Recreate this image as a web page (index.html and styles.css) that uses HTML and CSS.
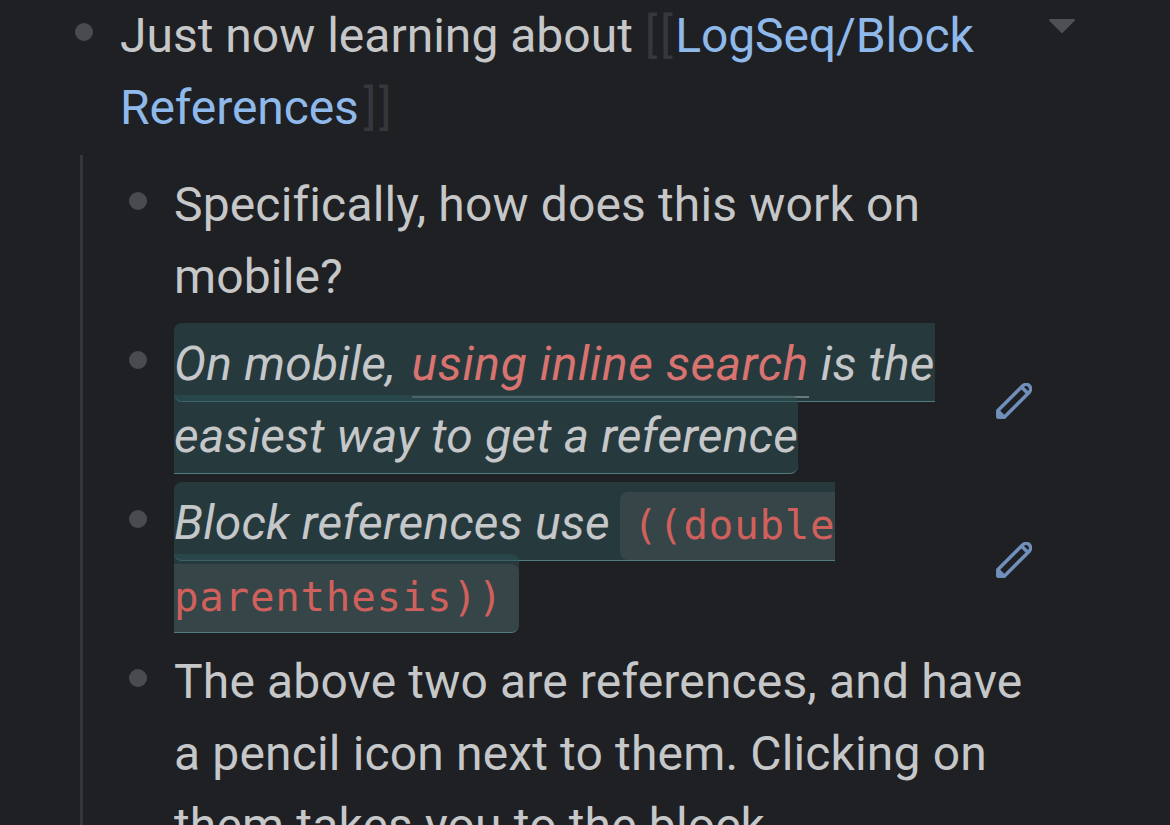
FILE: index.html
```html
<!DOCTYPE html>
<html lang="en">
<head>
<meta charset="UTF-8">
<meta name="viewport" content="width=device-width, initial-scale=1.0">
<title>Block References</title>
<link rel="stylesheet" href="styles.css">
</head>
<body>
<div id="outliner">
    <div class="block top-block">
        <span class="bullet"></span>
        <div class="block-text">Just now learning about <span class="brackets">[[</span><a class="page-link">LogSeq/Block References</a><span class="brackets closing">]]</span></div>
        <svg class="collapse-arrow" viewBox="0 0 28 16"><path d="M2 2H26L14 14Z"/></svg>
    </div>
    <div class="children">
        <div class="block">
            <span class="bullet"></span>
            <div class="block-text">Specifically, how does this work on mobile?</div>
        </div>
        <div class="block">
            <span class="bullet"></span>
            <div class="block-text ref-text"><span class="block-ref">On mobile, <a class="inline-link">using inline search</a> is the easiest way to get a reference</span></div>
            <svg class="pencil" viewBox="0 0 36 36"><path d="M2 34V27.5L26.5 3C28.5 1 31.5 1 33.3 2.7C35 4.5 35 7.500 33 9.500L8.500 34Z"/><path d="M25.500 4L32 10.500"/><path class="pencil-tip" d="M2 28L8 34H2Z"/></svg>
        </div>
        <div class="block">
            <span class="bullet"></span>
            <div class="block-text ref-text"><span class="block-ref">Block references use <code class="inline-code">((double parenthesis))</code></span></div>
            <svg class="pencil" viewBox="0 0 36 36"><path d="M2 34V27.5L26.5 3C28.5 1 31.5 1 33.3 2.7C35 4.5 35 7.500 33 9.500L8.500 34Z"/><path d="M25.500 4L32 10.500"/><path class="pencil-tip" d="M2 28L8 34H2Z"/></svg>
        </div>
        <div class="block">
            <span class="bullet"></span>
            <div class="block-text">The above two are references, and have a pencil icon next to them. Clicking on them takes you to the block</div>
        </div>
    </div>
</div>
</body>
</html>
```

FILE: styles.css
```css
html, body {
    margin: 0;
    height: 825px;
    overflow: hidden;
    background-color: #1f2024;
}

body {
    font-family: 'Roboto', sans-serif;
    font-size: 48px;
    line-height: 72px;
    color: #c6c7c9;
}

.block {
    display: flex;
    align-items: flex-start;
}

.top-block {
    margin-left: 75px;
}

.bullet {
    flex: none;
    width: 18px;
    height: 18px;
    margin-top: 23px;
    margin-right: 27px;
    border-radius: 50%;
    background: #4a4b50;
}

.top-block .block-text {
    width: 920px;
    letter-spacing: 0;
}

.block-text {
    flex: none;
    width: 866px;
    letter-spacing: 0.15px;
}

.ref-text {
    width: 810px;
    letter-spacing: 0.2px;
}

.brackets {
    letter-spacing: 2.5px;
    color: #36373b;
}

.closing {
    margin-left: 5px;
}

.page-link {
    letter-spacing: -0.1px;
    color: #8fb9ea;
}

.collapse-arrow {
    flex: none;
    width: 28px;
    height: 16px;
    margin-top: 18px;
    margin-left: 8px;
    fill: #4f5054;
    stroke: #4f5054;
    stroke-width: 2;
    stroke-linejoin: round;
}

.children {
    display: flex;
    flex-direction: column;
    gap: 15px;
    height: 700px;
    margin-top: 11px;
    margin-left: 80px;
    padding-top: 14px;
    padding-left: 46px;
    border-left: 3px solid #35363a;
}

.block-ref {
    padding: 12px 0 9px;
    border-bottom: 1px solid #4f7c80;
    border-radius: 8px;
    background: rgba(44, 80, 84, 0.55);
    font-style: italic;
}

.inline-link {
    margin-left: 4px;
    padding-bottom: 4px;
    border-bottom: 2px solid #6f7a7c;
    letter-spacing: 0.6px;
    color: #d9736f;
}

.inline-code {
    margin-left: -2px;
    padding: 9px 16px 11px 13px;
    border-radius: 8px;
    background: rgba(78, 88, 90, 0.38);
    font-family: 'DejaVu Sans Mono', monospace;
    font-size: 40.8px;
    line-height: 1;
    letter-spacing: 0.75px;
    font-style: normal;
    color: #d0605c;
}

.pencil {
    flex: none;
    width: 36px;
    height: 36px;
    margin-top: 55px;
    margin-left: 12px;
    fill: none;
    stroke: #7090bb;
    stroke-width: 3.5;
    stroke-linejoin: round;
}

.pencil-tip {
    fill: #7090bb;
}
```
